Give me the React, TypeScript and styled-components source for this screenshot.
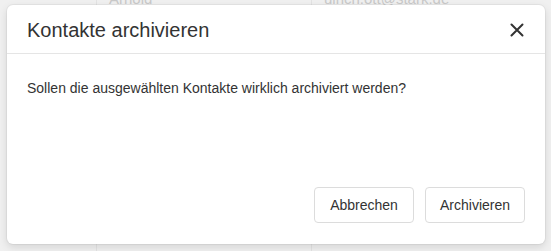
import React from "react";
import styled, { createGlobalStyle } from "styled-components";

const GlobalStyle = createGlobalStyle`
  html, body {
    margin: 0;
    padding: 0;
    background: #eeeeee;
    font-family: "Liberation Sans", Arial, sans-serif;
  }
`;

const Page = styled.div`
  position: relative;
  width: 551px;
  height: 251px;
  overflow: hidden;
  background: #f0f0f0;
`;

const Table = styled.div`
  margin-top: -11px;
  display: grid;
  grid-template-columns: 96px 215px 1fr;
`;

const Cell = styled.div<{ $divider?: boolean }>`
  height: 262px;
  padding: 0 12px;
  box-sizing: border-box;
  font-size: 15px;
  line-height: 20px;
  color: #c9c9c9;
  border-left: ${(p) => (p.$divider ? "1px solid #e3e3e3" : "none")};
`;

const Modal = styled.div`
  position: absolute;
  left: 7px;
  top: 5px;
  width: 538px;
  height: 239px;
  background: #fff;
  border-radius: 6px;
  box-shadow: 0 3px 9px rgba(0, 0, 0, 0.12), 0 0 0 1px rgba(0, 0, 0, 0.04);
  display: flex;
  flex-direction: column;
`;

const Header = styled.div`
  height: 49px;
  box-sizing: border-box;
  padding: 2px 20px 0;
  display: flex;
  align-items: center;
  justify-content: space-between;
  border-bottom: 1px solid #e5e5e5;
`;

const Title = styled.h4`
  margin: 0;
  font-size: 20px;
  font-weight: 400;
  color: #333;
`;

const Close = styled.button`
  border: none;
  background: none;
  padding: 0;
  width: 16px;
  height: 16px;
  display: flex;
  align-items: center;
  justify-content: center;
  cursor: pointer;
`;

const Body = styled.div`
  flex: 1;
  padding: 24px 20px;
  font-size: 14px;
  line-height: 20px;
  color: #333;
`;

const Footer = styled.div`
  display: flex;
  justify-content: flex-end;
  gap: 11px;
  padding: 0 20px 21px;
`;

const Button = styled.button`
  height: 36px;
  width: 100px;
  border: 1px solid #dcdcdc;
  border-radius: 4px;
  background: #fff;
  font-family: "Liberation Sans", Arial, sans-serif;
  font-size: 14px;
  color: #333;
`;

export default function App() {
  return (
    <Page>
      <GlobalStyle />
      <Table>
        <Cell />
        <Cell $divider>Arnold</Cell>
        <Cell $divider>ulrich.ott@stark.de</Cell>
      </Table>
      <Modal>
        <Header>
          <Title>Kontakte archivieren</Title>
          <Close aria-label="Schließen">
            <svg width="14" height="14" viewBox="0 0 14 14">
              <path d="M1.5 1.5 L12.5 12.5 M12.5 1.5 L1.5 12.5" stroke="#333" strokeWidth="2" strokeLinecap="round" />
            </svg>
          </Close>
        </Header>
        <Body>Sollen die ausgewählten Kontakte wirklich archiviert werden?</Body>
        <Footer>
          <Button>Abbrechen</Button>
          <Button>Archivieren</Button>
        </Footer>
      </Modal>
    </Page>
  );
}
